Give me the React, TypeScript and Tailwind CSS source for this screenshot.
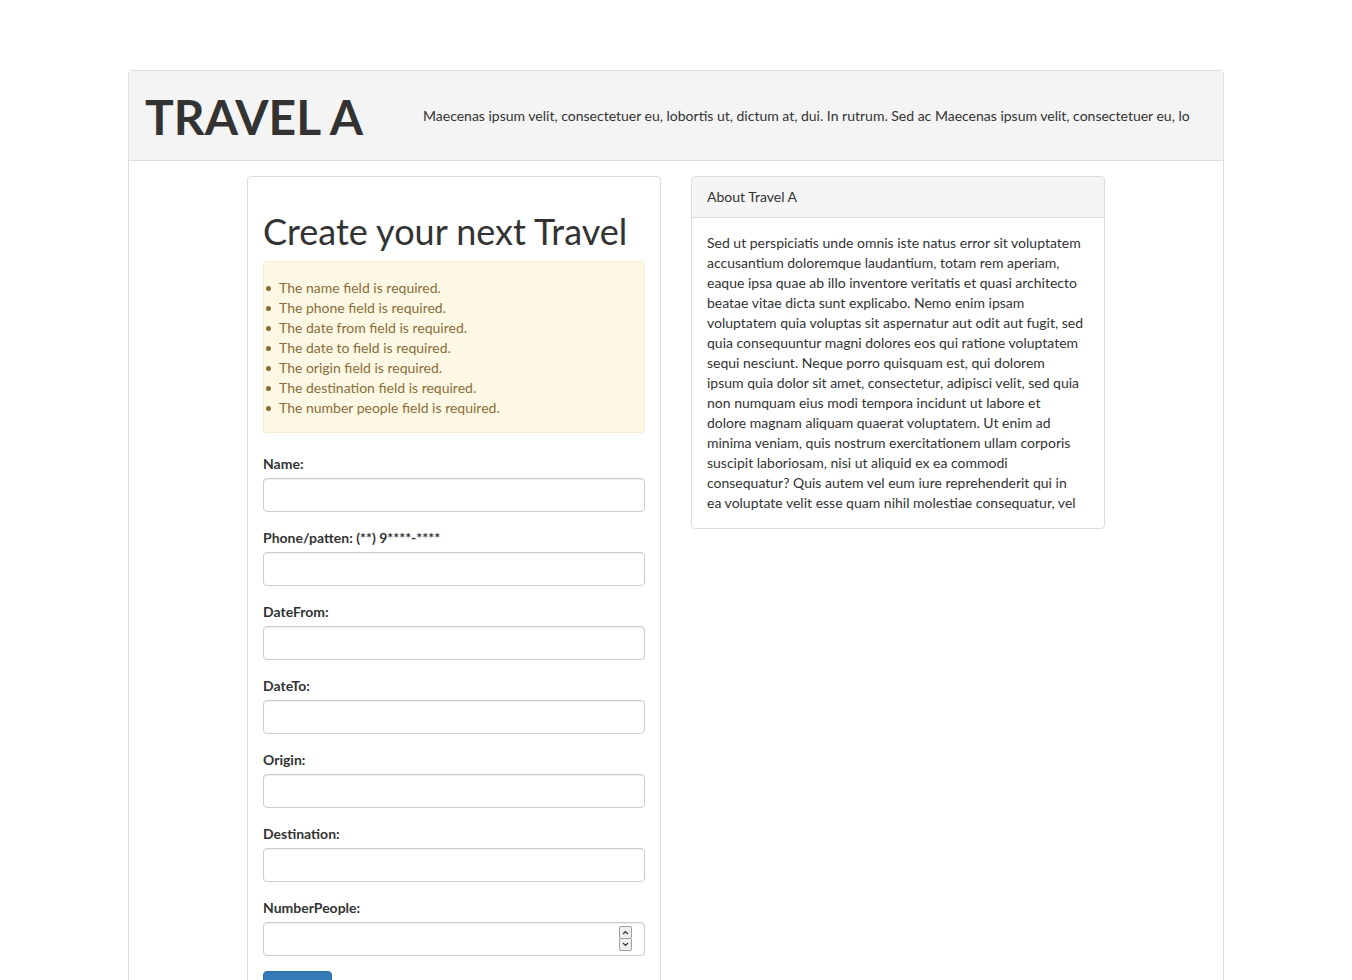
import React from "react";

const errors = [
  "The name field is required.",
  "The phone field is required.",
  "The date from field is required.",
  "The date to field is required.",
  "The origin field is required.",
  "The destination field is required.",
  "The number people field is required.",
];

const fields = [
  "Name:",
  "Phone/patten: (**) 9****-****",
  "DateFrom:",
  "DateTo:",
  "Origin:",
  "Destination:",
];

const aboutLines = [
  "Sed ut perspiciatis unde omnis iste natus error sit voluptatem",
  "accusantium doloremque laudantium, totam rem aperiam,",
  "eaque ipsa quae ab illo inventore veritatis et quasi architecto",
  "beatae vitae dicta sunt explicabo. Nemo enim ipsam",
  "voluptatem quia voluptas sit aspernatur aut odit aut fugit, sed",
  "quia consequuntur magni dolores eos qui ratione voluptatem",
  "sequi nesciunt. Neque porro quisquam est, qui dolorem",
  "ipsum quia dolor sit amet, consectetur, adipisci velit, sed quia",
  "non numquam eius modi tempora incidunt ut labore et",
  "dolore magnam aliquam quaerat voluptatem. Ut enim ad",
  "minima veniam, quis nostrum exercitationem ullam corporis",
  "suscipit laboriosam, nisi ut aliquid ex ea commodi",
  "consequatur? Quis autem vel eum iure reprehenderit qui in",
  "ea voluptate velit esse quam nihil molestiae consequatur, vel",
];

function Input() {
  return (
    <input
      type="text"
      className="block w-full h-[34px] border border-[#ccc] rounded-[4px] px-3 bg-white shadow-[inset_0_1px_1px_rgba(0,0,0,0.075)] outline-none"
    />
  );
}

export default function App() {
  return (
    <div className="min-h-[1100px] bg-white pt-[70px] font-['Lato',sans-serif] text-[14px] leading-[20px] text-[#333]">
      <div className="mx-auto w-[1096px] min-h-[1100px] border border-[#ddd] rounded-t-[4px]">
        <div className="flex items-center h-[90px] bg-[#f4f4f4] border-b border-[#ddd] pl-[16px] pr-[30px]">
          <div className="w-[278px] shrink-0 text-[48px] leading-[52px] font-bold text-[#333] pt-[2px]">
            TRAVEL A
          </div>
          <div className="flex-1 whitespace-nowrap overflow-hidden">
            Maecenas ipsum velit, consectetuer eu, lobortis ut, dictum at, dui. In rutrum. Sed ac Maecenas ipsum velit, consectetuer eu, lo
          </div>
        </div>

        <div className="flex justify-center items-start gap-[30px] pt-[15px]">
          <div className="w-[414px] border border-[#ddd] rounded-[4px] p-[15px]">
            <h1 className="mt-[20px] mb-[10px] text-[36px] leading-[39px] font-normal text-[#333]">
              Create your next Travel
            </h1>
            <div className="mb-[20px] border border-[#faebcc] bg-[#fcf8e3] rounded-[4px] px-[15px] pt-[16px] pb-[14px] text-[#8a6d3b]">
              <ul className="list-none pl-0">
                {errors.map((e) => (
                  <li key={e} className="relative">
                    <span className="absolute left-[-13px] top-[8px] w-[5px] h-[5px] rounded-full bg-[#8a6d3b]" />
                    {e}
                  </li>
                ))}
              </ul>
            </div>
            {fields.map((f) => (
              <div key={f} className="mb-[15px]">
                <label className="block pt-[1px] mb-[4px] font-bold">{f}</label>
                <Input />
              </div>
            ))}
            <div className="mb-[15px]">
              <label className="block pt-[1px] mb-[4px] font-bold">NumberPeople:</label>
              <div className="relative">
                <Input />
                <div className="absolute right-[13px] top-[4px] flex flex-col w-[13px]">
                  <div className="h-[13px] border border-[#a0a0a0] rounded-[2px] bg-[#f0f0f0] flex items-center justify-center">
                    <svg width="7" height="5" viewBox="0 0 7 5">
                      <path d="M1 4 L3.5 1.5 L6 4" fill="none" stroke="#333" strokeWidth="1.2" />
                    </svg>
                  </div>
                  <div className="h-[13px] border border-[#a0a0a0] rounded-[2px] bg-[#f0f0f0] flex items-center justify-center -mt-[1px]">
                    <svg width="7" height="5" viewBox="0 0 7 5">
                      <path d="M1 1 L3.5 3.5 L6 1" fill="none" stroke="#333" strokeWidth="1.2" />
                    </svg>
                  </div>
                </div>
              </div>
            </div>
            <button className="h-[34px] px-[12px] border border-[#2e6da4] bg-[#337ab7] text-white rounded-[4px]">
              Submit
            </button>
          </div>

          <div className="w-[414px] border border-[#ddd] rounded-[4px]">
            <div className="h-[41px] bg-[#f5f5f5] border-b border-[#ddd] rounded-t-[3px] px-[15px] flex items-center">
              About Travel A
            </div>
            <div className="p-[15px]">
              {aboutLines.map((l) => (
                <div key={l} className="whitespace-nowrap">
                  {l}
                </div>
              ))}
            </div>
          </div>
        </div>
      </div>
    </div>
  );
}
